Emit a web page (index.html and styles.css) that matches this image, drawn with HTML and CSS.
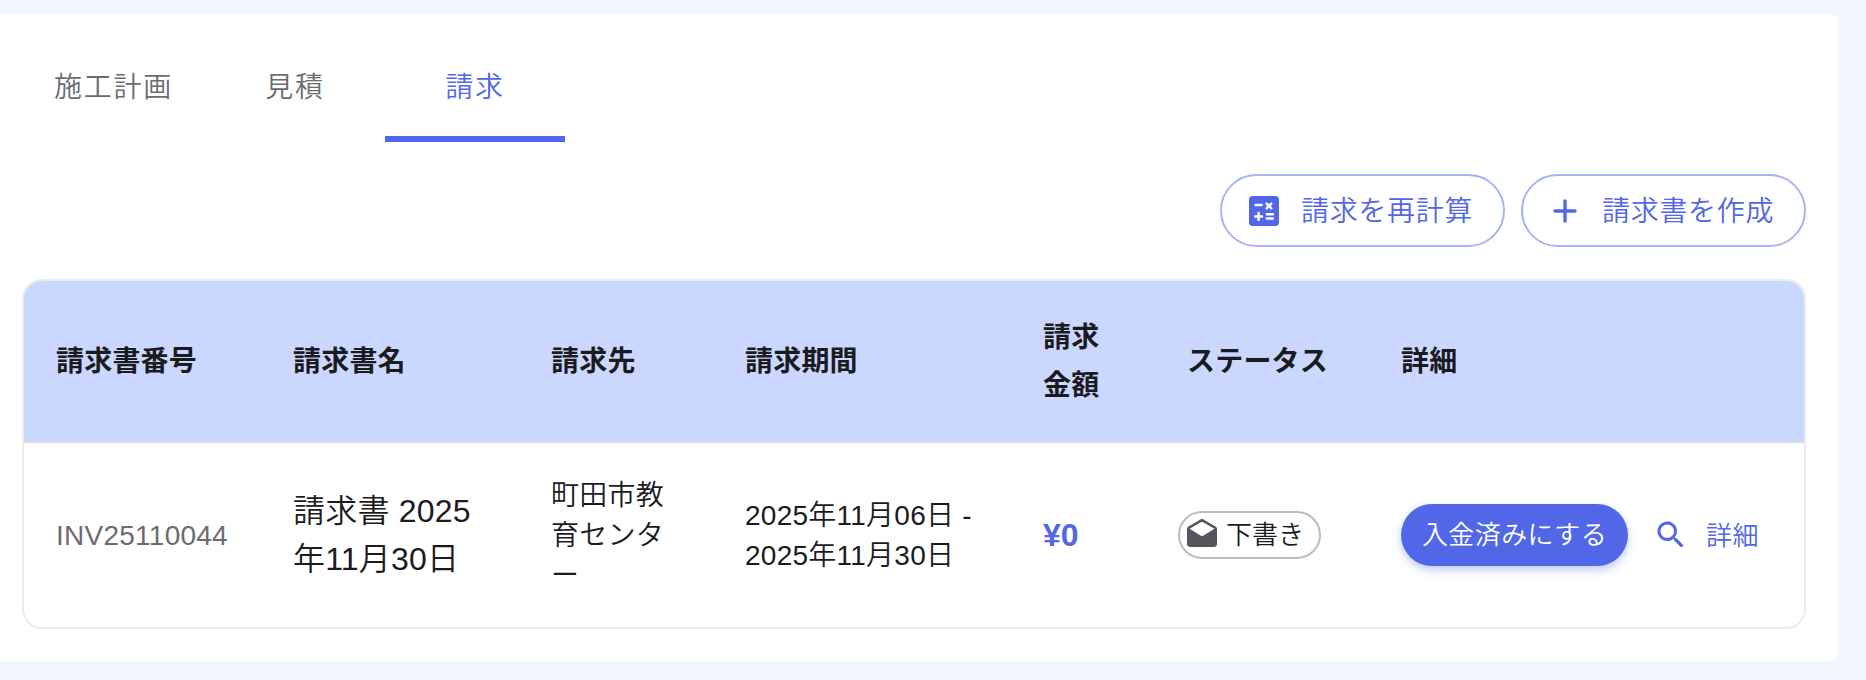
FILE: index.html
```html
<!DOCTYPE html>
<html lang="ja">
<head>
    <meta charset="UTF-8">
    <meta name="viewport" content="width=device-width, initial-scale=1.0">
    <title>請求</title>
    <link rel="stylesheet" href="styles.css">
</head>
<body>

    <div class="card">
        <div class="tabs" role="tablist">
            <button class="tab" role="tab">施工計画</button>
            <button class="tab" role="tab">見積</button>
            <button class="tab active" role="tab" aria-selected="true">請求</button>
        </div>

        <div class="actions">
            <button class="outline-button">
                <svg class="icon" viewBox="0 0 24 24"><path d="M19 3H5c-1.1 0-2 .9-2 2v14c0 1.1.9 2 2 2h14c1.1 0 2-.9 2-2V5c0-1.1-.9-2-2-2m-5.97 4.06c.29-.29.77-.29 1.06 0l.88.88.88-.88c.29-.29.77-.29 1.06 0s.29.77 0 1.06l-.88.88.88.88c.29.29.29.77 0 1.06s-.77.29-1.06 0l-.88-.88-.88.88c-.29.29-.77.29-1.06 0s-.29-.77 0-1.06l.88-.88-.88-.88c-.29-.29-.29-.77 0-1.06M7 7.72h3.5c.41 0 .75.34.75.75s-.34.75-.75.75H7c-.41 0-.75-.34-.75-.75s.34-.75.75-.75M10.75 16H9.5v1.25c0 .41-.34.75-.75.75S8 17.66 8 17.25V16H6.75c-.41 0-.75-.34-.75-.75s.34-.75.75-.75H8v-1.25c0-.41.34-.75.75-.75s.75.34.75.75v1.25h1.25c.41 0 .75.34.75.75s-.34.75-.75.75m6.5 1.25h-3.5c-.41 0-.75-.34-.75-.75s.34-.75.75-.75h3.5c.41 0 .75.34.75.75s-.34.75-.75.75m0-2.5h-3.5c-.41 0-.75-.34-.75-.75s.34-.75.75-.75h3.5c.41 0 .75.34.75.75s-.34.75-.75.75"/></svg>
                <span class="label">請求を再計算</span>
            </button>
            <button class="outline-button">
                <svg class="icon" viewBox="0 0 24 24"><path d="M18 13h-5v5c0 .55-.45 1-1 1s-1-.45-1-1v-5H6c-.55 0-1-.45-1-1s.45-1 1-1h5V6c0-.55.45-1 1-1s1 .45 1 1v5h5c.55 0 1 .45 1 1s-.45 1-1 1"/></svg>
                <span class="label">請求書を作成</span>
            </button>
        </div>

        <div class="table-wrap">
            <table>
                <colgroup>
                    <col class="col-number">
                    <col class="col-name">
                    <col class="col-client">
                    <col class="col-period">
                    <col class="col-amount">
                    <col class="col-status">
                    <col class="col-detail">
                </colgroup>
                <thead>
                    <tr>
                        <th>請求書番号</th>
                        <th>請求書名</th>
                        <th>請求先</th>
                        <th>請求期間</th>
                        <th>請求金額</th>
                        <th class="center">ステータス</th>
                        <th>詳細</th>
                    </tr>
                </thead>
                <tbody>
                    <tr>
                        <td class="number">INV25110044</td>
                        <td class="name">請求書 2025年11月30日</td>
                        <td class="client">町田市教育センター</td>
                        <td class="period">2025年11月06日 - 2025年11月30日</td>
                        <td class="amount">¥0</td>
                        <td>
                            <span class="chip">
                                <svg class="chip-icon" viewBox="0 0 24 24"><path d="M21.99 8c0-.72-.37-1.35-.94-1.7l-8.04-4.71c-.62-.37-1.4-.37-2.02 0L2.95 6.3C2.38 6.65 2 7.28 2 8v10c0 1.1.9 2 2 2h16c1.1 0 2-.9 2-2zm-11.05 4.34L3.74 7.84l7.25-4.25c.62-.37 1.4-.37 2.02 0l7.25 4.25-7.2 4.5c-.65.4-1.47.4-2.12 0"/></svg>
                                下書き
                            </span>
                        </td>
                        <td class="detail">
                            <div class="row-actions">
                                <button class="paid-button">入金済みにする</button>
                                <button class="text-button">
                                    <svg class="search-icon" viewBox="0 0 24 24"><path d="M15.5 14h-.79l-.28-.27c1.2-1.4 1.82-3.31 1.48-5.34-.47-2.78-2.79-5-5.59-5.34-4.23-.52-7.79 3.04-7.27 7.27.34 2.8 2.56 5.12 5.34 5.59 2.03.34 3.94-.28 5.34-1.48l.27.28v.79l4.25 4.25c.41.41 1.08.41 1.49 0s.41-1.08 0-1.49zm-6 0C7.01 14 5 11.99 5 9.5S7.01 5 9.5 5 14 7.01 14 9.5 11.99 14 9.5 14"/></svg>
                                    <span class="label">詳細</span>
                                </button>
                            </div>
                        </td>
                    </tr>
                </tbody>
            </table>
        </div>
    </div>

</body>
</html>
```

FILE: styles.css
```css
* {
    box-sizing: border-box;
}
body {
    margin: 0;
    padding: 14px 28px 19px 0;
    background-color: #f2f6ff;
    color: #1b1b1f;
    font-family: "Liberation Sans", "Noto Sans CJK JP", sans-serif;
    font-weight: 350;
}
button {
    margin: 0;
    padding: 0;
    border: none;
    background: none;
    color: #5167e7;
    font-family: inherit;
    font-weight: 350;
    white-space: nowrap;
    cursor: pointer;
}
svg {
    flex-shrink: 0;
    fill: currentColor;
}
.card {
    height: 647px;
    padding: 32px 32px 32px 22px;
    background-color: #fff;
    border-radius: 0 8px 8px 0;
}

/* タブ */
.tabs {
    display: flex;
    height: 96px;
}
.tab {
    min-width: 180px;
    padding: 0 31px 13px;
    border-bottom: 6px solid transparent;
    color: #6b6b70;
    font-size: 28px;
    letter-spacing: 1.8px;
}
.tab:first-child {
    width: 183px;
}
.tab.active {
    border-bottom-color: #5167e7;
    color: #5167e7;
}

/* 操作ボタン */
.actions {
    display: flex;
    justify-content: flex-end;
    gap: 16px;
    margin: 32px 0;
}
.outline-button {
    display: flex;
    align-items: center;
    gap: 17px;
    width: 285px;
    height: 73px;
    padding-left: 22px;
    border: 2px solid #a8b3f3;
    border-radius: 37px;
    font-size: 28px;
    letter-spacing: 0.7px;
}
.label {
    padding-bottom: 4px;
}
.icon {
    width: 40px;
    height: 40px;
}

/* 請求テーブル */
.table-wrap {
    height: 350px;
    border: 2px solid #ececec;
    border-radius: 20px;
    overflow: hidden;
}
table {
    width: 100%;
    border-collapse: separate;
    border-spacing: 0;
    table-layout: fixed;
}
.col-number { width: 237px; }
.col-name { width: 258px; }
.col-client { width: 194px; }
.col-period { width: 298px; }
.col-amount { width: 135px; }
.col-status { width: 223px; }
th, td {
    padding: 32px;
    text-align: left;
    vertical-align: middle;
}
th {
    height: 162px;
    padding: 33px 32px 31px;
    background-color: #cad7ff;
    border-bottom: 2px solid #dddddf;
    font-size: 28px;
    font-weight: 700;
    line-height: 48px;
    letter-spacing: 0.2px;
}
th.center {
    padding: 2px 0 0;
    text-align: center;
}
td {
    height: 184px;
    font-size: 28px;
    line-height: 40px;
}
.number, .client, .period {
    padding-top: 33px;
    padding-bottom: 31px;
    letter-spacing: 0.25px;
}
.number {
    color: #6b6b70;
}
.name {
    font-size: 32px;
    line-height: 48px;
    letter-spacing: 0.2px;
}
.amount {
    color: #5167e7;
    font-size: 32px;
    font-weight: 700;
}
.chip {
    display: flex;
    align-items: center;
    gap: 6px;
    width: 143px;
    height: 48px;
    padding-left: 4px;
    border: 2px solid #bdbdbd;
    border-radius: 24px;
    font-size: 26px;
    white-space: nowrap;
}
.chip-icon {
    width: 36px;
    height: 36px;
    color: #55555c;
}
.detail {
    padding-right: 0;
}
.row-actions {
    display: flex;
    align-items: center;
    gap: 25px;
}
.paid-button {
    width: 227px;
    height: 62px;
    padding-bottom: 6px;
    border-radius: 31px;
    background-color: #5167e7;
    box-shadow: 0 4px 10px rgba(81, 103, 231, 0.35);
    color: #fff;
    font-size: 26px;
    letter-spacing: 0.4px;
}
.text-button {
    display: flex;
    align-items: center;
    gap: 17px;
    font-size: 26px;
    letter-spacing: 0.4px;
}
.search-icon {
    width: 36px;
    height: 36px;
}
```
